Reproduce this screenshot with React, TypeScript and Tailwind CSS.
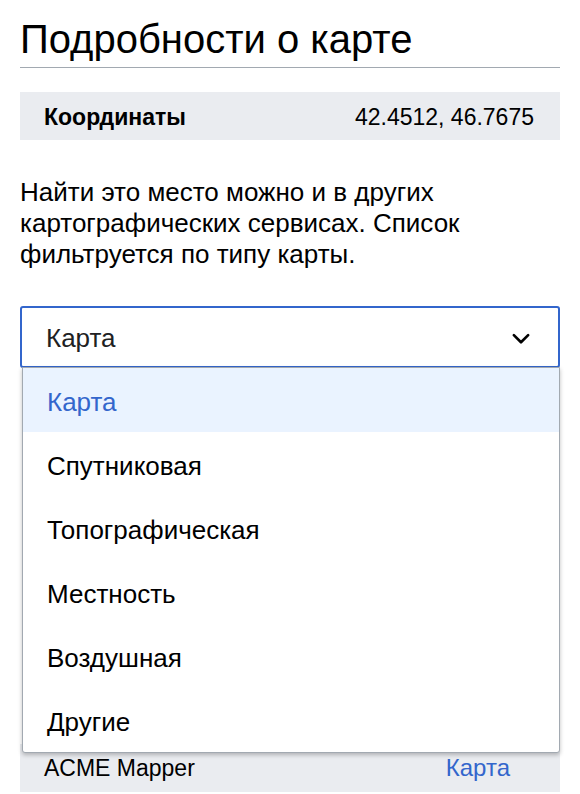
import { useState } from "react";

const options = [
  "Карта",
  "Спутниковая",
  "Топографическая",
  "Местность",
  "Воздушная",
  "Другие",
];

const Chevron = () => (
  <svg width="22" height="22" viewBox="0 0 20 20" fill="none">
    <path
      d="M3.5 6.5 L10 13 L16.5 6.5"
      stroke="#000"
      strokeWidth="2.4"
      strokeLinecap="round"
      strokeLinejoin="round"
    />
  </svg>
);

export default function App() {
  const [selected] = useState<string>("Карта");
  return (
    <div
      className="min-h-[794px] bg-white px-5 pt-[18px] text-[#000]"
      style={{ fontFamily: '"Liberation Sans", Arial, sans-serif' }}
    >
      <h1 className="border-b border-[#a2a9b1] pb-[6px] text-[40px] leading-[43px]">
        Подробности о карте
      </h1>

      <div className="mt-6 flex h-12 items-center justify-between bg-[#eaecf0] pl-6 pr-[26px] pt-[2px] text-[23px]">
        <span className="font-bold">Координаты</span>
        <span>42.4512, 46.7675</span>
      </div>

      <p className="mt-[37px] text-[26px] leading-[31px]">
        Найти это место можно и в других картографических сервисах. Список
        фильтруется по типу карты.
      </p>

      <div className="relative mt-[36px]">
        <button className="flex h-[62px] w-full items-center justify-between rounded-[3px] border-2 border-[#3366cc] pl-6 pr-[26px] pt-[3px] text-[26px] text-[#202122]">
          <span>{selected}</span>
          <Chevron />
        </button>

        <ul className="absolute left-[2px] right-0 top-[61px] z-10 rounded-b-[3px] border border-[#a2a9b1] bg-white shadow-[0_2px_4px_rgba(0,0,0,0.25)]">
          {options.map((o) => (
            <li
              key={o}
              className={
                o === selected
                  ? "flex h-16 items-center bg-[#eaf3ff] pl-6 pt-[4px] text-[26px] text-[#3366cc]"
                  : "flex h-16 items-center pl-6 pt-[4px] text-[26px] text-[#000]"
              }
            >
              {o}
            </li>
          ))}
        </ul>

        <div className="mt-[376px] flex h-12 items-center justify-between bg-[#eaecf0] pl-6 pr-[50px] text-[23px]">
          <span>ACME Mapper</span>
          <a className="text-[24px] text-[#3366cc]">Карта</a>
        </div>
      </div>
    </div>
  );
}
